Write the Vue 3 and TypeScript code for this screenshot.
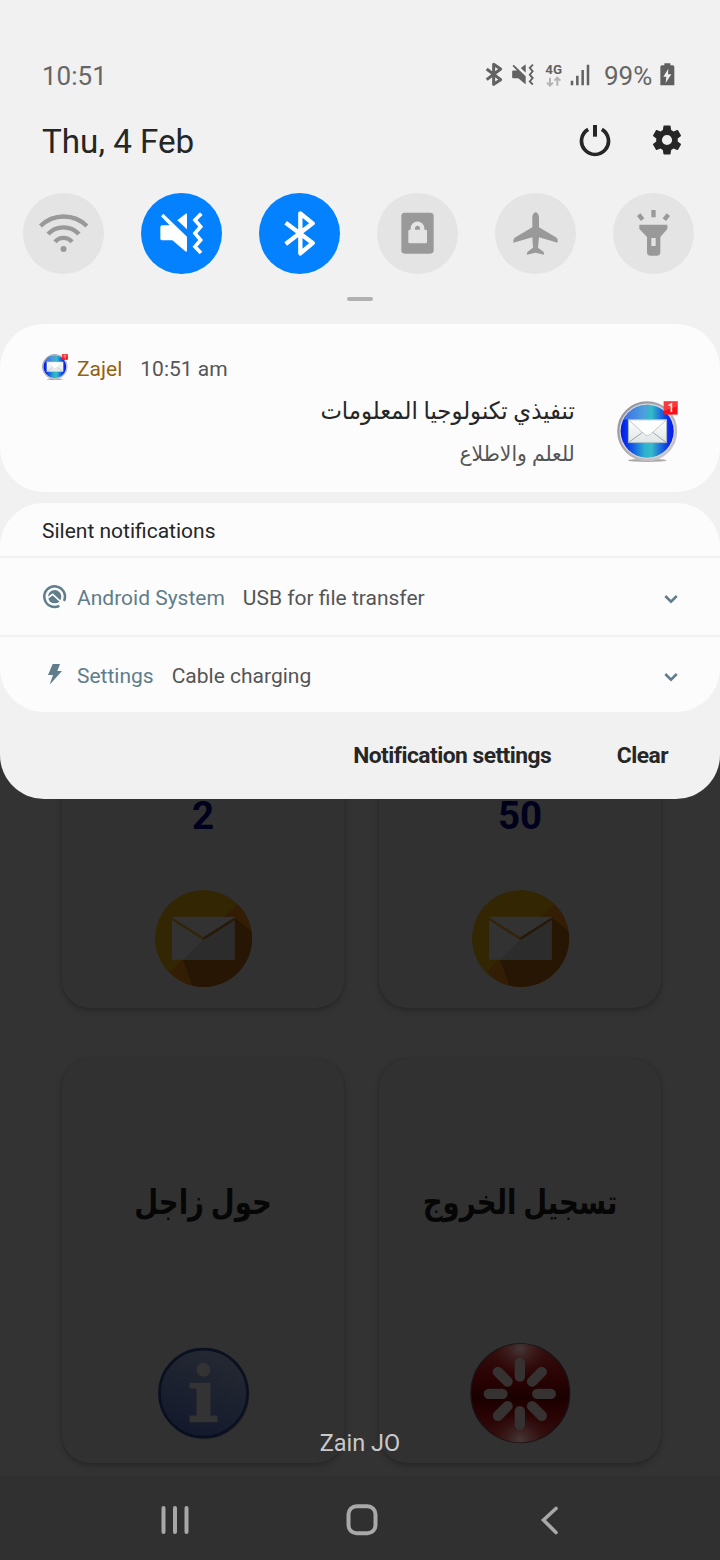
<script setup lang="ts">
interface Tile { id: string; on: boolean; box: string }
interface AppCard { id: string; label: string; kind: 'count' | 'title'; icon: 'mail' | 'info' | 'exit' }

const tiles: Tile[] = [
  { id: 'wifi', on: false, box: '69 39 243 243' },
  { id: 'mute', on: true, box: '423 39 243 243' },
  { id: 'bluetooth', on: true, box: '777 39 243 243' },
  { id: 'lock', on: false, box: '51 39 243 243' },
  { id: 'plane', on: false, box: '405 39 243 243' },
  { id: 'torch', on: false, box: '759 39 243 243' },
]

const cards: AppCard[] = [
  { id: 'in', label: '2', kind: 'count', icon: 'mail' },
  { id: 'out', label: '50', kind: 'count', icon: 'mail' },
  { id: 'about', label: 'حول زاجل', kind: 'title', icon: 'info' },
  { id: 'logout', label: 'تسجيل الخروج', kind: 'title', icon: 'exit' },
]

const silent = [
  { id: 'usb', app: 'Android System', text: 'USB for file transfer' },
  { id: 'cable', app: 'Settings', text: 'Cable charging' },
]

const spokes = [0, 45, 90, 135, 180, 225, 270, 315]
</script>

<template>
  <div class="screen">
    <svg class="defs" width="0" height="0" aria-hidden="true">
      <defs>
        <symbol id="sym-mute" viewBox="480 97 130 126">
          <path fill="currentColor" d="M490 101 L561 170 V212 Q560 217 556 214 L517 181 H487 Q481 181 481 176 V141 Q481 136 487 136 H509 L483 109Z M532 121 L557 101 Q561 99 561 103 V148Z" />
          <path fill="none" stroke="currentColor" stroke-width="11" d="M604 101 L585 120 L602 140 L585 160 L602 180 L585 200 L603 219" />
        </symbol>
        <linearGradient id="g-ball" x1="0" x2="1" y1="0" y2="0">
          <stop offset="0" stop-color="#0418e8" /><stop offset=".14" stop-color="#0b39ee" />
          <stop offset=".45" stop-color="#2cb0cf" /><stop offset=".58" stop-color="#35bcc4" />
          <stop offset=".88" stop-color="#0b32f0" /><stop offset="1" stop-color="#0418e8" />
        </linearGradient>
        <linearGradient id="g-rim" x1="0" x2="1" y1="0" y2="1">
          <stop offset="0" stop-color="#8d8d98" /><stop offset="1" stop-color="#d2ced2" />
        </linearGradient>
        <linearGradient id="g-paper" x1="0" x2="0" y1="0" y2="1">
          <stop offset="0" stop-color="#ffffff" /><stop offset="1" stop-color="#dfe5e4" />
        </linearGradient>
        <symbol id="sym-zajel" viewBox="951 62 184 184">
          <ellipse cx="1042" cy="241" rx="58" ry="5" fill="#a9a9a9" />
          <circle cx="1042" cy="153" r="87" fill="#d9d7db" stroke="url(#g-rim)" stroke-width="7" />
          <circle cx="1042" cy="153" r="80" fill="url(#g-ball)" />
          <path d="M971 118 A80 80 0 0 1 1052 74 Q1040 96 1040 118Z" fill="#5d9be0" opacity=".65" />
          <rect x="985" y="118" width="116" height="70" fill="url(#g-paper)" stroke="#9bb0ba" stroke-width="2" />
          <path d="M986 187 L1030 155 M1100 187 L1056 155" stroke="#8c9a9c" stroke-width="2.5" />
          <path d="M986 119 H1100 L1050 164 Q1043 170 1036 164Z" fill="#fdfefe" stroke="#b6bfc0" stroke-width="2.5" />
          <rect x="1092" y="63" width="42" height="40" fill="#f51218" />
          <path d="M1092 63 H1134 V78 L1092 92Z" fill="#ff5a5a" opacity=".55" />
          <path d="M1106 76 L1115 71 V95" fill="none" stroke="#ffe6e6" stroke-width="5" />
        </symbol>
        <clipPath id="clip-mail"><circle cx="491.500" cy="476" r="145.500" /></clipPath>
        <linearGradient id="g-info" x1=".7" x2=".3" y1="0" y2="1">
          <stop offset="0" stop-color="#252932" /><stop offset="1" stop-color="#12192c" />
        </linearGradient>
        <radialGradient id="g-shine" cx=".5" cy=".5" r=".5">
          <stop offset="0" stop-color="#443838" /><stop offset="1" stop-color="#3a1212" stop-opacity="0" />
        </radialGradient>
        <linearGradient id="g-red" x1="0" x2="0" y1="0" y2="1">
          <stop offset="0" stop-color="#360e0e" /><stop offset=".38" stop-color="#280203" /><stop offset=".54" stop-color="#1a0000" />
          <stop offset=".72" stop-color="#290304" /><stop offset="1" stop-color="#341010" />
        </linearGradient>
        <clipPath id="clip-red"><circle cx="481.500" cy="219" r="148" /></clipPath>
      </defs>
    </svg>

    <main class="app">
      <section v-for="c in cards" :key="c.id" class="card">
        <div class="label" :class="c.kind">{{ c.label }}</div>
        <div class="art">
          <svg v-if="c.icon === 'mail'" width="98" height="98" viewBox="343 330.500 294 294">
            <g clip-path="url(#clip-mail)">
              <circle cx="491.500" cy="476" r="145.500" fill="#332603" />
              <path d="M592 375 L650 430 V640 H470 L390 578Z" fill="#331d05" />
              <path d="M584 413 L650 465 V640 H467 L430 540Z" fill="#261603" />
            </g>
            <rect x="397" y="411" width="188" height="129" fill="#323232" />
            <path d="M585 413 V540 H430 L492 478Z" fill="#2c2c2c" />
            <path d="M397 417 L491 477" fill="none" stroke="#332407" stroke-width="7" />
            <path d="M491 477 L585 417" fill="none" stroke="#281806" stroke-width="7" />
          </svg>
          <svg v-else-if="c.icon === 'info'" width="94" height="94" viewBox="348.500 81.500 282 282">
            <circle cx="494" cy="224" r="135" fill="#292929" />
            <circle cx="491" cy="220" r="132" fill="url(#g-info)" stroke="#0a1020" stroke-width="8" />
            <circle cx="491" cy="150" r="21" fill="#333" />
            <path d="M449 189 H512 V287 H533 V307 H449 V287 H470 V206 H449Z" fill="#333" />
          </svg>
          <svg v-else width="102" height="102" viewBox="327.500 68.500 306 306">
            <circle cx="481.500" cy="219" r="148" fill="url(#g-red)" stroke="#1b1011" stroke-width="4" />
            <g clip-path="url(#clip-red)">
              <ellipse cx="481" cy="85" rx="92" ry="85" fill="url(#g-shine)" />
              <ellipse cx="481" cy="358" rx="92" ry="85" fill="url(#g-shine)" />
            </g>
            <g stroke="#363232" stroke-width="31" stroke-linecap="round">
              <line v-for="a in spokes" :key="a" x1="480" y1="169" x2="480" y2="128" :transform="`rotate(${a} 480 221)`" />
            </g>
          </svg>
        </div>
      </section>
    </main>
    <nav class="nav">
      <svg width="720" height="84" viewBox="0 0 720 84" fill="none" stroke="#a8a8a8" stroke-width="4" stroke-linecap="round">
        <path d="M163.500 32V56M175 32V56M186.500 32V56" />
        <rect x="348.500" y="30.200" width="27" height="27" rx="8" />
        <path d="M556 32.500L543.500 44L556 56.500" stroke-width="3.600" />
      </svg>
    </nav>
    <div class="carrier">Zain JO</div>

    <aside class="shade">
      <header class="status">
        <span class="clock">10:51</span>
        <svg width="137" height="28" viewBox="42 36 411 84" class="sticons">
          <path d="M50 57 L92 89 L71 103 V43 L92 57 L50 89" fill="none" stroke="#626262" stroke-width="9" stroke-linejoin="round" />
          <use href="#sym-mute" x="126" y="41" width="66" height="66" color="#626262" />
          <text x="226" y="73" class="net">4G</text>
          <path d="M240 83 V106 M231 98 L240 107 L249 98 M262 107 V84 M253 92 L262 83 L271 92" fill="none" stroke="#b4b4b4" stroke-width="6" />
          <path d="M306 92V106M322 77V106M338 60V106M354 44V106" stroke="#626262" stroke-width="7.500" />
        </svg>
        <span class="pct">99%</span>
        <svg class="batt" width="15" height="23" viewBox="569 39 45 69">
          <path d="M582 40 H600 V46 H607 Q612 46 612 51 V106 H570 V51 Q570 46 575 46 H582Z" fill="#606060" />
          <path d="M594 56 L579 80 H588 L586 99 L603 73 H593Z" fill="#f1f1f1" />
        </svg>
      </header>
      <div class="daterow">
        <span class="date">Thu, 4 Feb</span>
        <svg class="power" width="32" height="34" viewBox="327 220 96 102" fill="none" stroke="#262626">
          <path d="M354.500 236 A40.500 40.500 0 1 0 395.500 236" stroke-width="11" />
          <path d="M375 223 V258" stroke-width="12" />
        </svg>
        <svg class="gear" width="36" height="36" viewBox="0 0 24 24">
          <path fill="#262626" fill-rule="evenodd" d="M19.140 12.940c.04-.3.060-.61.060-.94 0-.32-.02-.64-.07-.94l2.030-1.580c.18-.14.23-.41.120-.61l-1.920-3.320c-.12-.22-.37-.29-.59-.22l-2.390.96c-.5-.38-1.030-.7-1.620-.94l-.36-2.540c-.04-.24-.24-.41-.48-.41h-3.840c-.24 0-.43.170-.47.410l-.36 2.540c-.59.240-1.130.570-1.620.940l-2.390-.96c-.22-.08-.47 0-.59.220L2.740 8.870c-.12.210-.08.470.120.610l2.030 1.580c-.05.300-.09.630-.09.940s.02.640.070.940l-2.030 1.580c-.18.140-.23.410-.12.610l1.920 3.320c.12.220.37.290.59.220l2.390-.96c.5.380 1.030.700 1.620.940l.36 2.540c.05.240.24.410.48.410h3.840c.24 0 .44-.17.470-.41l.36-2.540c.59-.24 1.130-.56 1.620-.94l2.390.96c.22.080.47 0 .59-.22l1.920-3.320c.12-.22.070-.47-.12-.61l-2.010-1.580zM12 15.400a3.400 3.400 0 1 1 0-6.800a3.400 3.400 0 0 1 0 6.800z" />
        </svg>
      </div>
      <div class="tiles">
        <div v-for="t in tiles" :key="t.id" class="tile" :class="{ on: t.on }">
          <svg width="81" height="81" :viewBox="t.box">
            <g v-if="t.id === 'wifi'" fill="none" stroke="currentColor" stroke-width="13">
              <path d="M121.500 138 A99 99 0 0 1 260.500 138 M144 162 A64 64 0 0 1 237 162 M165 185.500 A33 33 0 0 1 216 185.500" />
              <circle cx="190.500" cy="207" r="9" fill="currentColor" stroke="none" />
            </g>
            <use v-else-if="t.id === 'mute'" href="#sym-mute" x="480" y="97" width="130" height="126" />
            <path v-else-if="t.id === 'bluetooth'" d="M857 128 L938 189 L901 220 V100 L938 130 L857 192" fill="none" stroke="currentColor" stroke-width="13" stroke-linejoin="round" />
            <g v-else-if="t.id === 'lock'">
              <rect x="124" y="98" width="97" height="123" rx="10" fill="currentColor" />
              <rect x="145" y="149" width="56" height="41" rx="4" fill="#e4e4e4" />
              <path d="M158.500 152 V145 A14 14 0 0 1 186.500 145 V152" fill="none" stroke="#e4e4e4" stroke-width="13" />
            </g>
            <path v-else-if="t.id === 'plane'" fill="currentColor" d="M527 97 C533 97 537 106 537 113 V142 L590 173 Q594 176 593 187 Q592 189 588 187 L537 172 L534 203 L550 215 Q553 217 552 223 Q551 225 546 223 L527 218 L507 223 Q502 225 501 223 Q500 217 503 215 L519 203 L517 172 L465 187 Q461 189 460 187 Q459 176 464 173 L517 142 V113 C517 106 521 97 527 97Z" />
            <g v-else>
              <path fill="currentColor" d="M838 134 H922 V147 L901 171 V217 Q901 227 891 227 H871 Q861 227 861 217 V171 L838 147Z" />
              <path stroke="currentColor" stroke-width="13" d="M880.500 90V112M836 104L848 119M925 104L913 119" />
              <rect x="874" y="174" width="13" height="24" fill="#e4e4e4" />
            </g>
          </svg>
        </div>
      </div>
      <div class="handle" />

      <section class="panel zajel">
        <div class="head">
          <svg class="ic" width="26" height="26" viewBox="0 0 26 26"><use href="#sym-zajel" width="26" height="26" /></svg>
          <span class="name brown">Zajel</span><span class="info">10:51 am</span>
        </div>
        <div class="body">
          <div class="msgs" dir="rtl">
            <div class="m1">تنفيذي تكنولوجيا المعلومات</div>
            <div class="m2">للعلم والاطلاع</div>
          </div>
          <svg width="61" height="61" viewBox="0 0 61 61"><use href="#sym-zajel" width="61" height="61" /></svg>
        </div>
      </section>

      <section class="panel silent">
        <div class="stitle">Silent notifications</div>
        <div v-for="n in silent" :key="n.id" class="srow">
          <svg v-if="n.id === 'usb'" class="ic" width="26" height="26" viewBox="125 251 78 78">
            <path d="M177 316.500 A31 31 0 1 1 191 302" fill="none" stroke="#607d8b" stroke-width="7.500" />
            <circle cx="163" cy="289" r="20" fill="#607d8b" />
            <path d="M142 293 L157 282 L192 314" fill="none" stroke="#fcfcfc" stroke-width="5" />
            <path d="M147 300 L157 291 L172 306 Q156 312 147 300Z" fill="#607d8b" />
          </svg>
          <svg v-else class="ic" width="26" height="26" viewBox="125 485 78 78">
            <path d="M157 491 H179 L171 512 H185 L148 553 L158 524 H143Z" fill="#607d8b" />
          </svg>
          <span class="name slate">{{ n.app }}</span><span class="info">{{ n.text }}</span>
          <svg class="chev" width="16" height="12" viewBox="0 0 16 12"><path d="M2.300 3 L8 8.700 L13.700 3" fill="none" stroke="#607d8b" stroke-width="2.600" /></svg>
        </div>
      </section>

      <footer class="foot">
        <span>Notification settings</span><span>Clear</span>
      </footer>
    </aside>
  </div>
</template>

<style>
body { background: #323232; }
</style>

<style scoped>
.screen { position: relative; width: 720px; height: 1560px; overflow: hidden; background: #333; font-family: Roboto, "DejaVu Sans", sans-serif; display: flex; flex-direction: column; }
.screen * { box-sizing: border-box; }
svg { display: block; flex: none; }
.defs { position: absolute; }
.app { flex: none; height: 1476px; padding: 604px 0 0 62px; display: grid; grid-template-columns: 282px 282px; grid-auto-rows: 404px; gap: 51px 35px; align-content: start; }
.card { display: flex; flex-direction: column; justify-content: space-between; border-radius: 28px; background: #313131; box-shadow: 0 3px 6px rgba(0, 0, 0, .22), 0 0 3px rgba(0, 0, 0, .1); }
.label { text-align: center; white-space: nowrap; }
.count { padding-top: 188px; font-size: 38.500px; line-height: 48px; font-weight: 700; color: #00001c; }
.title { padding-top: 119px; font-size: 34px; line-height: 48px; font-weight: 700; color: #060606; transform: scaleX(.81); }
.art { height: 139px; display: flex; align-items: center; justify-content: center; }
.nav { height: 84px; background: #303030; }
.carrier { position: absolute; top: 1428px; left: 0; width: 720px; text-align: center; font-size: 23.500px; line-height: 30px; color: #c9c9c9; }

.shade { position: absolute; inset: 0 0 auto 0; height: 799px; background: #f1f1f1; border-radius: 0 0 44px 44px; overflow: hidden; display: flex; flex-direction: column; }
.status { height: 52px; margin-top: 50px; padding: 0 45px 0 42px; display: flex; align-items: center; font-size: 26px; color: #666; }
.clock { margin-right: auto; }
.sticons { margin-right: -17px; }
.pct { margin-right: 7px; width: 49px; }
.batt { margin-top: -3px; }
.net { font-size: 40px; font-weight: 700; fill: #626262; }
.daterow { height: 78px; padding: 0 35px 0 42px; display: flex; align-items: center; color: #262626; }
.date { margin-right: auto; font-size: 33.200px; }
.power { margin-top: -1px; }
.gear { margin: -2px 0 0 38px; }
.tiles { margin-top: 13px; padding-left: 23px; display: flex; gap: 37px; }
.tile { flex: none; width: 81px; height: 81px; border-radius: 50%; background: #e4e4e4; color: #999; }
.tile.on { background: #0381fe; color: #fff; }
.handle { flex: none; width: 26px; height: 4px; border-radius: 2px; margin: 23px auto 23px 347px; background: #b0b0b0; }
.panel { flex: none; background: #fcfcfc; border-radius: 44px; }
.zajel { height: 168px; padding-top: 30px; }
.head { display: flex; align-items: center; height: 28px; padding-left: 42px; }
.name { margin-left: 9px; padding-top: 1px; font-size: 21px; }
.info { margin-left: 18px; padding-top: 1px; font-size: 21px; color: #555; }
.brown { color: #96610f; }
.slate { color: #607d8b; }
.body { display: flex; justify-content: flex-end; gap: 42px; padding: 19px 42px 0 0; }
.msgs { display: flex; flex-direction: column; margin-top: -10px; }
.m1 { font-size: 24px; line-height: 40px; color: #262626; white-space: nowrap; transform: scaleX(.95); transform-origin: right; }
.m2 { font-size: 21px; line-height: 46px; color: #555; white-space: nowrap; transform: scaleX(.966); transform-origin: right; }
.silent { margin-top: 11px; height: 209px; }
.stitle { height: 53px; padding: 1px 0 0 42px; font-size: 21px; line-height: 55px; color: #262626; }
.srow { height: 79px; border-top: 2px solid #f1f1f1; padding: 2px 41px 0 42px; display: flex; align-items: center; }
.srow + .srow { height: 77px; }
.ic { position: relative; top: -1px; }
.chev { margin-left: auto; position: relative; top: 1px; }
.foot { height: 87px; display: flex; justify-content: flex-end; padding: 0 52px 0 0; gap: 65.500px; font-size: 22.800px; font-weight: 700; line-height: 87px; color: #262626; letter-spacing: -.52px; }
</style>
